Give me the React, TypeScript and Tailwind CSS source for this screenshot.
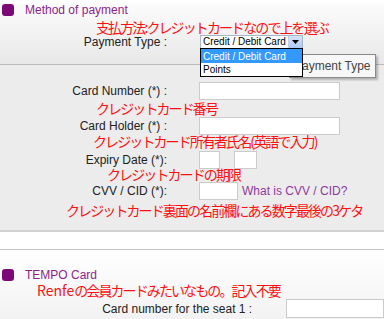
import React from "react";

const jp = { fontFamily: '"Noto Sans CJK JP", "Liberation Sans", sans-serif' };

function Note({ left, children, className = "" }: { left: string; children: React.ReactNode; className?: string }) {
  return (
    <div
      className={`${left} text-[14px] leading-[16px] tracking-[-1.9px] text-[#ff1010] whitespace-nowrap ${className}`}
      style={jp}
    >
      {children}
    </div>
  );
}

function Row({ label, children }: { label: string; children: React.ReactNode }) {
  return (
    <div className="flex items-center h-[18px]">
      <div className="w-[167px] text-right text-[12px] leading-[14px] text-[#222] whitespace-nowrap">{label}</div>
      <div className="ml-[32px] flex items-center h-full">{children}</div>
    </div>
  );
}

function Field({ w }: { w: string }) {
  return <div className={`${w} h-[18px] bg-white border border-[#cbcbcb]`} />;
}

export default function App() {
  return (
    <div
      className="relative w-[384px] h-[319px] overflow-hidden bg-white"
      style={{ fontFamily: '"Liberation Sans", Arial, sans-serif' }}
    >
      {/* Method of payment */}
      <div className="h-[62px] bg-linear-to-b from-[#fcfcfc] to-[#e8e8e8] border-b border-[#b9b9b9]">
        <div className="flex items-center h-[14px] mt-[3px] pl-[2px]">
          <div className="w-[12px] h-[12px] rounded-[3px] bg-[#7c0a76]" />
          <span className="ml-[11px] text-[12px] text-[#8e1d8e]">Method of payment</span>
        </div>
        <Note left="ml-[96px]" className="mt-[2px]">支払方法:クレジットカードなので上を選ぶ</Note>
        <div className="flex items-center h-[14px]">
          <div className="w-[167px] text-right text-[12px] leading-[14px] text-[#222]">Payment Type :</div>
          <div className="ml-[33px] w-[103px] h-[14px] flex items-center bg-white border border-[#a5b6c8]">
            <span className="flex-1 pl-[2px] text-[10px] leading-[12px] text-black whitespace-nowrap">Credit / Debit Card</span>
            <div className="w-[14px] h-[12px] flex items-center justify-center bg-linear-to-b from-[#d6e3fb] to-[#b2c8f2] border-l border-[#c0cfe8]">
              <svg width="7" height="4" viewBox="0 0 7 4">
                <path d="M0 0h7L3.5 4z" fill="#000" />
              </svg>
            </div>
          </div>
        </div>
      </div>

      {/* card fields */}
      <div className="h-[167px] bg-[#ececec] border-b-2 border-[#d2d2d2] pt-[17px]">
        <Row label="Card Number (*) :">
          <Field w="w-[141px]" />
        </Row>
        <Note left="ml-[96px]" className="h-[17px]">クレジットカード番号</Note>
        <Row label="Card Holder (*) :">
          <Field w="w-[141px]" />
        </Row>
        <Note left="ml-[93px]" className="-mt-[2px] h-[18px]">クレジットカード所有者氏名(英語で入力)</Note>
        <Row label="Expiry Date (*):">
          <Field w="w-[21px]" />
          <div className="ml-[14px]">
            <Field w="w-[23px]" />
          </div>
        </Row>
        <Note left="ml-[107px]" className="-mt-[3px] h-[16px]">クレジットカードの期限</Note>
        <Row label="CVV / CID (*):">
          <Field w="w-[39px]" />
          <span className="ml-[4px] text-[12px] text-[#8e3a9e] whitespace-nowrap">What is CVV / CID?</span>
        </Row>
        <Note left="ml-[66px]" className="mt-[2px]">クレジットカード裏面の名前欄にある数字最後の3ケタ</Note>
      </div>

      <div className="h-[18px] bg-white border-b border-[#c4c4c4]" />

      {/* TEMPO Card */}
      <div className="h-[80px] bg-linear-to-b from-white to-[#f0f0f0] pt-[18px]">
        <div className="flex items-center h-[14px] pl-[2px]">
          <div className="w-[12px] h-[12px] rounded-[3px] bg-[#7c0a76]" />
          <span className="ml-[11px] text-[12px] text-[#8e1d8e]">TEMPO Card</span>
        </div>
        <Note left="ml-[37px]" className="h-[17px]">
          <span className="tracking-normal">Renfe</span>の会員カードみたいなもの。記入不要
        </Note>
        <div className="flex items-center h-[19px]">
          <div className="w-[258px] text-right text-[12px] text-[#222] whitespace-nowrap">Card number for the seat 1 :</div>
          <div className="ml-[34px] w-[100px] h-[19px] bg-white border border-[#cbcbcb]" />
        </div>
      </div>

      {/* tooltip behind dropdown */}
      <div className="absolute left-[289px] top-[54px] w-[87px] h-[24px] bg-[#f7f7f7] border border-[#8a8a8a] shadow-[2px_2px_2px_rgba(0,0,0,0.25)] flex items-center pl-[4px] text-[12px] text-[#444] whitespace-nowrap">
        Payment Type
      </div>

      {/* open dropdown */}
      <div className="absolute left-[200px] top-[48px] w-[103px] bg-white border border-black text-[10px] leading-[13px]">
        <div className="bg-[#3399ff] text-white pl-[2px] h-[14px] flex items-center whitespace-nowrap">Credit / Debit Card</div>
        <div className="text-black pl-[2px] h-[13px] flex items-center">Points</div>
      </div>
    </div>
  );
}
